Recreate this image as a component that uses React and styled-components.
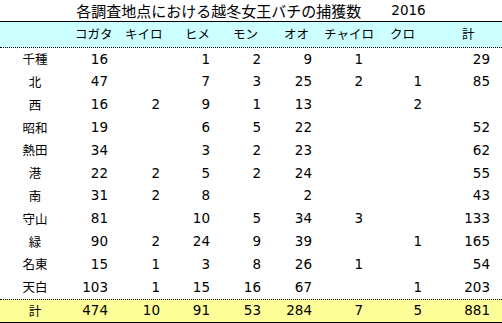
import React from 'react';
import styled, { createGlobalStyle } from 'styled-components';

const GlobalStyle = createGlobalStyle`
  body {
    margin: 0;
    background: #fff;
  }
`;

const Sheet = styled.div`
  width: 502px;
  color: #000;
  font-family: "DejaVu Sans", "Noto Sans CJK JP", sans-serif;
`;

const Title = styled.div`
  height: 21px;
  display: flex;
  justify-content: center;
  align-items: center;
  font-family: "Noto Sans CJK JP", sans-serif;
  font-size: 15px;
  line-height: 1;
`;

const Year = styled.span`
  font-family: "DejaVu Sans", sans-serif;
  font-size: 13.5px;
  margin-left: 30px;
`;

const Row = styled.div`
  display: grid;
  grid-template-columns: 70px 41px 52px 50px 51px 51px 51px 59px 68px 1fr;
  align-items: center;
  height: ${props => props.h || '22.8px'};
  background: ${props => props.bg || '#fff'};
  border-top: ${props => props.top || 'none'};
  border-bottom: ${props => props.bottom || 'none'};
`;

const HeadCell = styled.div`
  font-family: "Noto Sans CJK JP", sans-serif;
  font-size: 12.5px;
  line-height: 1;
  white-space: nowrap;
  padding-left: ${props => props.pl}px;
`;

const Area = styled.div`
  font-family: "Noto Sans CJK JP", sans-serif;
  font-size: 12.5px;
  line-height: 1;
  text-align: center;
`;

const Num = styled.div`
  font-size: 13.5px;
  line-height: 1;
  text-align: right;
  padding-right: 3px;
`;

const headers = [
  ['コガタ', 5],
  ['キイロ', 14],
  ['ヒメ', 22],
  ['モン', 20],
  ['オオ', 20],
  ['チャイロ', 9],
  ['クロ', 24],
  ['計', 37],
];

const rows = [
  ['千種', 16, '', 1, 2, 9, 1, '', 29],
  ['北', 47, '', 7, 3, 25, 2, 1, 85],
  ['西', 16, 2, 9, 1, 13, '', 2, ''],
  ['昭和', 19, '', 6, 5, 22, '', '', 52],
  ['熱田', 34, '', 3, 2, 23, '', '', 62],
  ['港', 22, 2, 5, 2, 24, '', '', 55],
  ['南', 31, 2, 8, '', 2, '', '', 43],
  ['守山', 81, '', 10, 5, 34, 3, '', 133],
  ['緑', 90, 2, 24, 9, 39, '', 1, 165],
  ['名東', 15, 1, 3, 8, 26, 1, '', 54],
  ['天白', 103, 1, 15, 16, 67, '', 1, 203],
];

const total = ['計', 474, 10, 91, 53, 284, 7, 5, 881];

const renderCells = (row) => (
  <>
    <Area>{row[0]}</Area>
    {row.slice(1).map((v, i) => <Num key={i}>{v}</Num>)}
  </>
);

const App = () => {
  return (
    <Sheet>
      <GlobalStyle />
      <Title>
        各調査地点における越冬女王バチの捕獲数<Year>2016</Year>
      </Title>
      <Row h="25px" bg="#ccffff" top="1px solid #000" bottom="1px dotted #000">
        <div />
        {headers.map(([label, pl]) => (
          <HeadCell key={label} pl={pl}>{label}</HeadCell>
        ))}
      </Row>
      {rows.map((row) => (
        <Row key={row[0]}>{renderCells(row)}</Row>
      ))}
      <Row h="22px" bg="#ffff99" top="1px dotted #000" bottom="1px solid #000">
        {renderCells(total)}
      </Row>
    </Sheet>
  );
};

export default App;
